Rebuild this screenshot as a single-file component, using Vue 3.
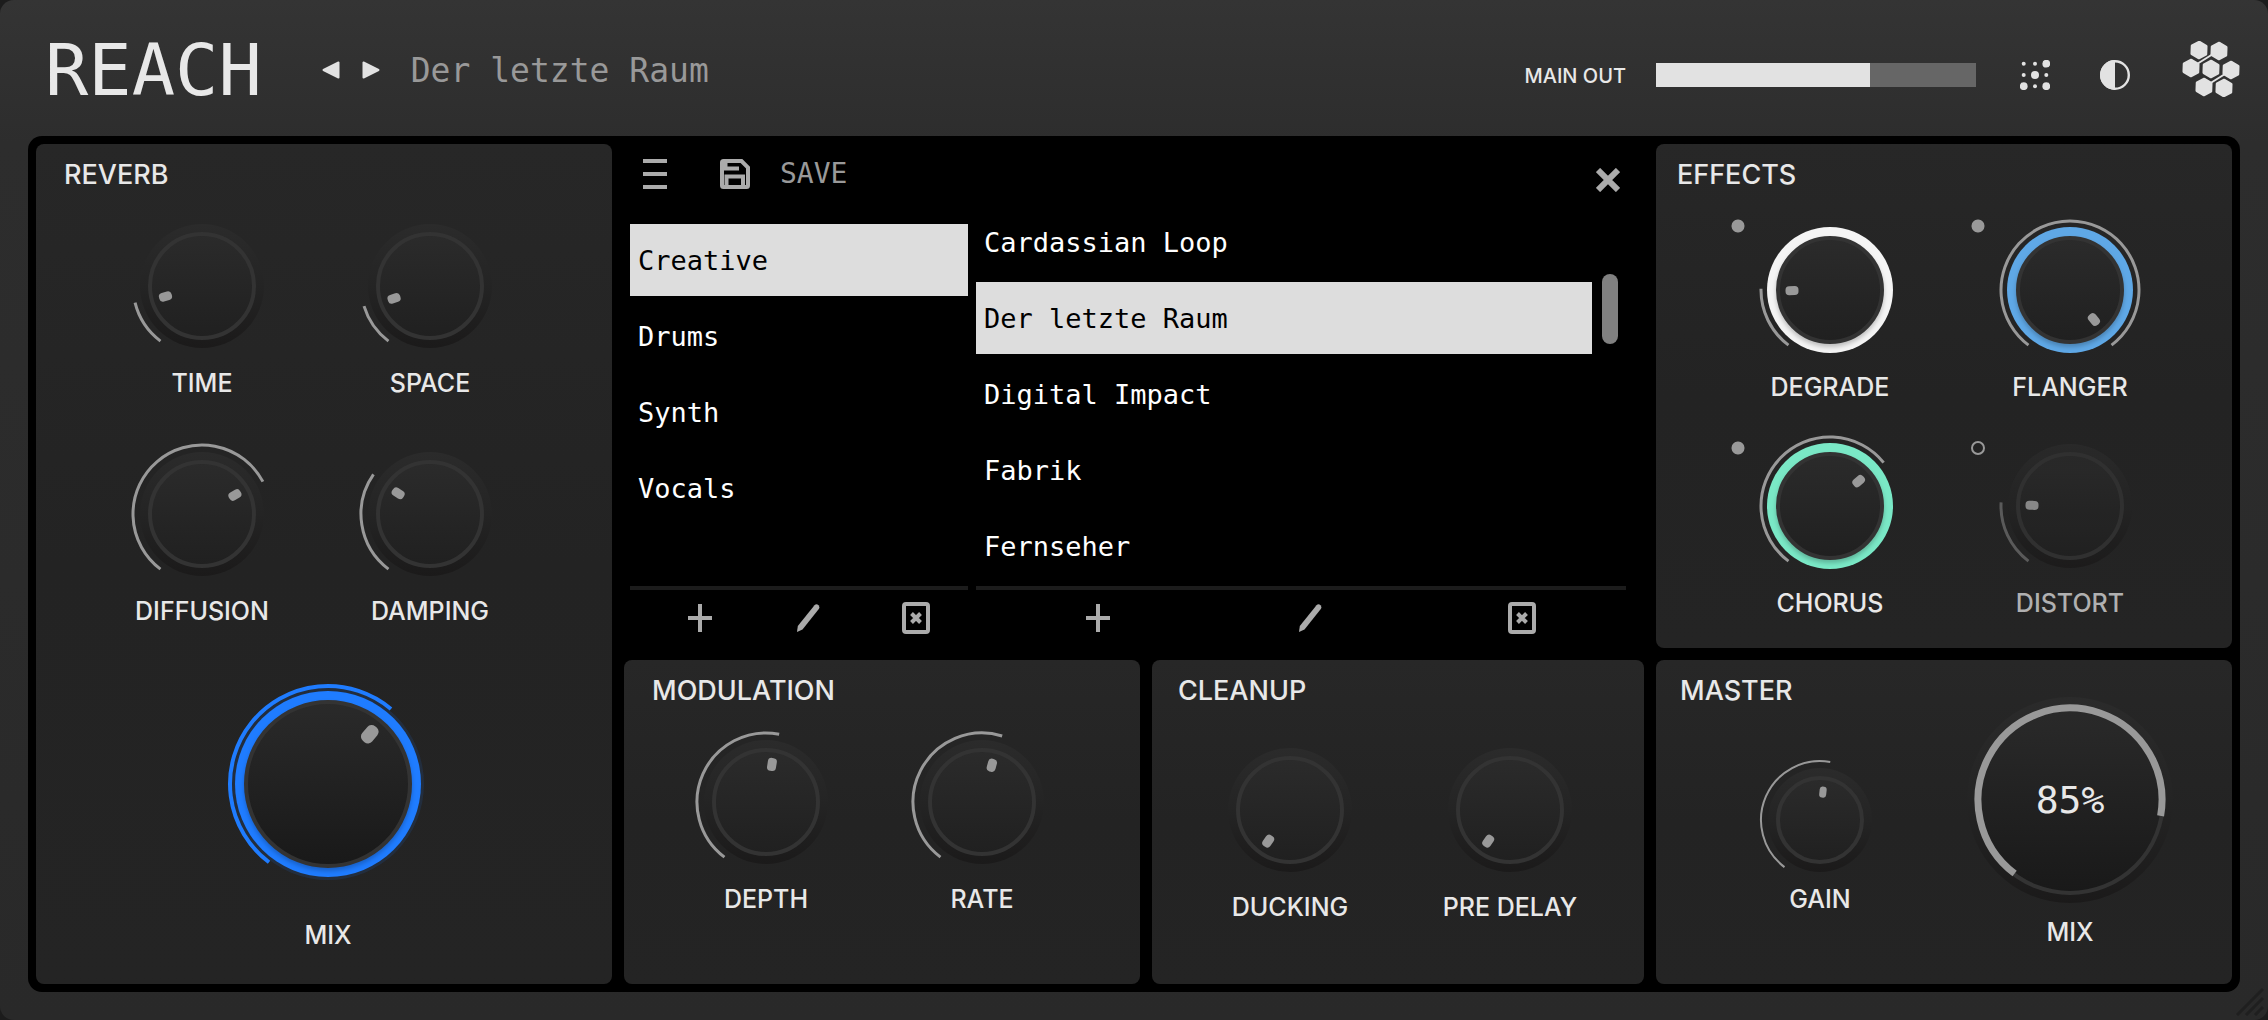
<script setup>
import { reactive, ref } from 'vue'

const START = -143

const sizes = {
  small: { box: 124, rim: 44, base: 52, arc: 59, arcWidth: 2, reach: 28, tick: [7, 11], lag: 4 },
  medium: { box: 144, rim: 54, base: 62, arc: 69, arcWidth: 3, reach: 38, tick: [9, 13], lag: 2 },
  large: { box: 208, rim: 84, base: 93, arc: 98, arcWidth: 4, reach: 65, tick: [13, 19], lag: 0 },
  readout: { box: 208, rim: 95, base: 103, arc: 92, arcWidth: 7, reach: 0, tick: null, lag: 0 },
}

const panels = reactive([
  {
    id: 'reverb',
    title: 'REVERB',
    knobs: [
      { id: 'time', label: 'TIME', size: 'medium', angle: -104 },
      { id: 'space', label: 'SPACE', size: 'medium', angle: -107 },
      { id: 'diffusion', label: 'DIFFUSION', size: 'medium', angle: 62 },
      { id: 'damping', label: 'DAMPING', size: 'medium', angle: -55 },
      { id: 'mix', label: 'MIX', size: 'large', angle: 40, halo: '#1f7cff', arcColor: '#1f7cff' },
    ],
  },
  {
    id: 'effects',
    title: 'EFFECTS',
    knobs: [
      { id: 'degrade', label: 'DEGRADE', size: 'medium', angle: -89, halo: '#f4f4f4', toggle: true, on: true },
      { id: 'flanger', label: 'FLANGER', size: 'medium', angle: 143, halo: '#5fa8e6', toggle: true, on: true },
      { id: 'chorus', label: 'CHORUS', size: 'medium', angle: 51, halo: '#7ae8c6', toggle: true, on: true },
      { id: 'distort', label: 'DISTORT', size: 'medium', angle: -87, toggle: true, on: false },
    ],
  },
  {
    id: 'modulation',
    title: 'MODULATION',
    knobs: [
      { id: 'depth', label: 'DEPTH', size: 'medium', angle: 11 },
      { id: 'rate', label: 'RATE', size: 'medium', angle: 17 },
    ],
  },
  {
    id: 'cleanup',
    title: 'CLEANUP',
    knobs: [
      { id: 'ducking', label: 'DUCKING', size: 'medium', angle: START },
      { id: 'predelay', label: 'PRE DELAY', size: 'medium', angle: START },
    ],
  },
  {
    id: 'master',
    title: 'MASTER',
    knobs: [
      { id: 'gain', label: 'GAIN', size: 'small', angle: 10 },
      { id: 'output', label: 'MIX', size: 'readout', angle: 100, text: '85%' },
    ],
  },
])

function point(center, radius, angle) {
  const a = (angle * Math.PI) / 180
  return `${(center + radius * Math.sin(a)).toFixed(2)} ${(center - radius * Math.cos(a)).toFixed(2)}`
}

function arcPath(knob) {
  const s = sizes[knob.size]
  const c = s.box / 2
  const sweep = knob.angle - START
  if (sweep <= 0) return ''
  return `M${point(c, s.arc, START)}A${s.arc} ${s.arc} 0 ${sweep > 180 ? 1 : 0} 1 ${point(c, s.arc, knob.angle)}`
}

const folders = ['Creative', 'Drums', 'Synth', 'Vocals']
const presets = ['Cardassian Loop', 'Der letzte Raum', 'Digital Impact', 'Fabrik', 'Fernseher']
const folder = ref('Creative')
const preset = ref('Der letzte Raum')
const level = ref(67)

const hexes = [[17, 9], [37, 10], [9, 27], [29, 28], [49, 29], [22, 46], [42, 47]]
</script>

<template>
  <div class="plugin">
    <svg class="defs" width="0" height="0" aria-hidden="true">
      <defs>
        <linearGradient id="knob-face" x1="0" y1="0" x2="0" y2="1">
          <stop offset="0" stop-color="#2b2b2b" />
          <stop offset="1" stop-color="#202020" />
        </linearGradient>
        <linearGradient id="knob-face-deep" x1="0" y1="0" x2="0" y2="1">
          <stop offset="0" stop-color="#2a2a2a" />
          <stop offset="1" stop-color="#191919" />
        </linearGradient>
        <linearGradient id="knob-base" x1="0" y1="0" x2="0" y2="1">
          <stop offset="0" stop-color="#2b2b2b" />
          <stop offset="0.5" stop-color="#242424" />
          <stop offset="1" stop-color="#1b1a1a" />
        </linearGradient>
      </defs>
    </svg>

    <header class="header">
      <h1 class="brand">REACH</h1>
      <div class="stepper">
        <button type="button" aria-label="Previous preset">
          <svg width="18" height="18" viewBox="0 0 18 18"><path d="M16.500 1.500v15L1.500 9z" class="tri" /></svg>
        </button>
        <button type="button" aria-label="Next preset">
          <svg width="18" height="18" viewBox="0 0 18 18"><path d="M1.500 1.500v15L16.500 9z" class="tri" /></svg>
        </button>
      </div>
      <p class="current">{{ preset }}</p>

      <div class="output">
        <span id="main-out" class="output-label">MAIN OUT</span>
        <div class="meter" role="meter" aria-labelledby="main-out" :aria-valuenow="level" aria-valuemin="0" aria-valuemax="100">
          <div class="meter-fill" :style="{ width: level + '%' }"></div>
        </div>
        <button type="button" class="icon-randomize" aria-label="Randomize">
          <svg width="30" height="30" viewBox="0 0 30 30" fill="#e2e2e2">
            <circle cx="3.700" cy="3.700" r="2" /><circle cx="15" cy="3.700" r="2" /><circle cx="26.300" cy="3.700" r="3.900" />
            <circle cx="3.700" cy="15" r="2" /><circle cx="15" cy="15" r="4" /><circle cx="26.300" cy="15" r="2" />
            <circle cx="3.700" cy="26.200" r="3.900" /><circle cx="15" cy="26.200" r="2" /><circle cx="26.300" cy="26.200" r="3.900" />
          </svg>
        </button>
        <button type="button" class="icon-theme" aria-label="Theme">
          <svg width="30" height="30" viewBox="0 0 30 30">
            <circle cx="15" cy="15" r="13.800" fill="none" stroke="#e2e2e2" stroke-width="2.400" />
            <path d="M15 0a15 15 0 0 0 0 30z" fill="#e2e2e2" />
          </svg>
        </button>
        <a href="#" class="logo" aria-label="About">
          <svg width="58" height="56" viewBox="0 0 58 56">
            <g fill="#e2e2e2" stroke="#e2e2e2" stroke-width="3" stroke-linejoin="round">
              <path
                v-for="([x, y], i) in hexes"
                :key="i"
                d="M0-7.800L6.900-3.900V3.900L0 7.800-6.900 3.900V-3.900z"
                :transform="`translate(${x} ${y}) rotate(2)`"
              />
            </g>
            <path d="M15 23L31 13M27 43L43 33" stroke="#e2e2e2" stroke-width="2" />
          </svg>
        </a>
      </div>
    </header>

    <main class="frame">
      <section class="browser" aria-label="Preset browser">
        <div class="toolbar">
          <button type="button" aria-label="Menu">
            <svg width="24" height="30" viewBox="0 0 24 30"><path d="M0 2h24M0 15h24M0 28h24" class="line" /></svg>
          </button>
          <button type="button" class="save">
            <svg width="30" height="30" viewBox="0 0 30 30">
              <path d="M4 2h17.500L28 8.500V26.500Q28 28 26.500 28H3.500Q2 28 2 26.500V3.500Q2 2 3.500 2z" class="line" />
              <path d="M5.500 2v7.500H19M6.500 28V17.500H23V28" class="line" />
            </svg>
            <span>SAVE</span>
          </button>
          <button type="button" class="close" aria-label="Close">
            <svg width="24" height="24" viewBox="0 0 24 24"><path d="M2 2l20 20M22 2L2 22" class="line thick" /></svg>
          </button>
        </div>

        <div class="column">
          <div class="viewport">
            <ul class="list">
              <li v-for="name in folders" :key="name">
                <button type="button" class="row" :class="{ active: name === folder }" @click="folder = name">{{ name }}</button>
              </li>
            </ul>
          </div>
          <div class="actions">
            <button type="button" aria-label="Add folder">
              <svg width="24" height="28" viewBox="0 0 24 28"><path d="M12 0v28M0 14h24" class="line" /></svg>
            </button>
            <button type="button" aria-label="Rename folder">
              <svg width="24" height="28" viewBox="0 0 24 28"><path d="M18.500 1.200Q20.500-.5 22.500 1.200 24 2.800 22.800 5L6.500 25.500 1 28 1.800 22z" fill="#ababab" /></svg>
            </button>
            <button type="button" aria-label="Delete folder">
              <svg width="28" height="32" viewBox="0 0 28 32">
                <rect x="2" y="2" width="24" height="28" rx="2" class="line" />
                <path d="M9.500 11.500l9 9M18.500 11.500l-9 9" class="line" />
              </svg>
            </button>
          </div>
        </div>

        <div class="column">
          <div class="viewport scrolled">
            <ul class="list">
              <li v-for="name in presets" :key="name">
                <button type="button" class="row" :class="{ active: name === preset }" @click="preset = name">{{ name }}</button>
              </li>
            </ul>
            <div class="thumb"></div>
          </div>
          <div class="actions">
            <button type="button" aria-label="Add preset">
              <svg width="24" height="28" viewBox="0 0 24 28"><path d="M12 0v28M0 14h24" class="line" /></svg>
            </button>
            <button type="button" aria-label="Rename preset">
              <svg width="24" height="28" viewBox="0 0 24 28"><path d="M18.500 1.200Q20.500-.5 22.500 1.200 24 2.800 22.800 5L6.500 25.500 1 28 1.800 22z" fill="#ababab" /></svg>
            </button>
            <button type="button" aria-label="Delete preset">
              <svg width="28" height="32" viewBox="0 0 28 32">
                <rect x="2" y="2" width="24" height="28" rx="2" class="line" />
                <path d="M9.500 11.500l9 9M18.500 11.500l-9 9" class="line" />
              </svg>
            </button>
          </div>
        </div>
      </section>

      <section v-for="panel in panels" :key="panel.id" class="panel" :class="panel.id">
        <h2 class="panel-title">{{ panel.title }}</h2>
        <div class="knobs">
          <div v-for="knob in panel.knobs" :key="knob.id" class="cell" :class="[knob.size, { off: knob.toggle && !knob.on }]">
            <input v-if="knob.toggle" v-model="knob.on" type="checkbox" class="toggle" :aria-label="knob.label + ' on'" />
            <label class="knob" :for="knob.id">
              <span class="dial">
                <svg
                  :width="sizes[knob.size].box"
                  :height="sizes[knob.size].box"
                  :viewBox="`0 0 ${sizes[knob.size].box} ${sizes[knob.size].box}`"
                  aria-hidden="true"
                >
                  <g :transform="`translate(${sizes[knob.size].box / 2} ${sizes[knob.size].box / 2})`">
                    <circle v-if="knob.arcColor" :r="sizes[knob.size].arc - 2" :fill="knob.arcColor" opacity="0.12" />
                    <circle :r="knob.halo ? sizes[knob.size].rim + 9 : sizes[knob.size].base" :fill="knob.halo || 'url(#knob-base)'" />
                    <circle
                      :r="sizes[knob.size].rim - 2"
                      :fill="sizes[knob.size].rim > 80 ? 'url(#knob-face-deep)' : 'url(#knob-face)'"
                      stroke="#333333"
                      stroke-width="4"
                      :class="{ lifted: knob.halo }"
                    />
                    <rect
                      v-if="sizes[knob.size].tick"
                      :x="-sizes[knob.size].tick[0] / 2"
                      :y="-sizes[knob.size].reach - sizes[knob.size].tick[1] / 2"
                      :width="sizes[knob.size].tick[0]"
                      :height="sizes[knob.size].tick[1]"
                      :rx="sizes[knob.size].tick[0] * 0.42"
                      fill="#999999"
                      :transform="`rotate(${knob.angle - sizes[knob.size].lag})`"
                    />
                  </g>
                  <path :d="arcPath(knob)" fill="none" :stroke="knob.arcColor || '#999999'" :stroke-width="sizes[knob.size].arcWidth" class="arc" />
                </svg>
                <span v-if="knob.text" class="value">{{ knob.text }}</span>
                <input :id="knob.id" v-model.number="knob.angle" type="range" min="-143" max="143" />
              </span>
              <span class="name">{{ knob.label }}</span>
            </label>
          </div>
        </div>
      </section>
    </main>

    <svg class="grip" width="28" height="28" viewBox="0 0 28 28" aria-hidden="true">
      <path d="M1 27L27 1M10 27L27 10M19 27l8-8" stroke="#1f1f1f" stroke-width="3" />
    </svg>
  </div>
</template>

<style>
body {
  margin: 0;
  background: #1c1c1c;
}
</style>

<style scoped>
.plugin {
  position: relative;
  display: flex;
  flex-direction: column;
  min-height: 100vh;
  box-sizing: border-box;
  padding: 0 28px 28px;
  border-radius: 14px;
  background: linear-gradient(#343434, #2d2d2d 14%, #292929);
  color: #e8e8e8;
  font-family: Inter, 'Liberation Sans', sans-serif;
}

.defs {
  position: absolute;
}

button {
  display: block;
  margin: 0;
  padding: 0;
  border: 0;
  background: none;
  color: inherit;
  font: inherit;
  cursor: pointer;
}

svg {
  display: block;
}

h1,
h2,
p,
ul {
  margin: 0;
  padding: 0;
  list-style: none;
}

.header {
  display: flex;
  align-items: center;
  height: 136px;
  padding: 4px 0 0 17px;
  box-sizing: border-box;
}

.brand,
.current,
.save,
.row,
.value {
  font-family: 'DejaVu Sans Mono', 'Liberation Mono', monospace;
  font-weight: 400;
}

.brand {
  font-size: 72px;
  line-height: 80px;
}

.stepper {
  display: flex;
  gap: 22px;
  margin: 0 31px 0 60px;
}

.tri {
  fill: #e2e2e2;
  stroke: #e2e2e2;
  stroke-width: 2px;
  stroke-linejoin: round;
}

.current {
  padding-top: 2px;
  color: #999999;
  font-size: 33px;
  line-height: 40px;
}

.output {
  display: flex;
  align-items: center;
  margin-left: auto;
  padding-top: 10px;
}

.output-label {
  padding-top: 1px;
  font-size: 20px;
  font-weight: 500;
  line-height: 24px;
}

.meter {
  width: 320px;
  height: 24px;
  margin: 0 44px 0 30px;
  background: #666666;
}

.meter-fill {
  height: 100%;
  background: #e2e2e2;
}

.icon-theme {
  margin: 0 52px 0 50px;
}

.logo {
  margin-bottom: 12px;
}

.frame {
  display: grid;
  flex: 1;
  grid-template-columns: 576fr 516fr 492fr 576fr;
  grid-template-rows: 504fr 324fr;
  grid-template-areas:
    'reverb browser browser effects'
    'reverb modulation cleanup master';
  gap: 12px;
  padding: 8px;
  border-radius: 14px;
  background: #000000;
}

.panel {
  min-width: 0;
  padding-top: 15px;
  border-radius: 8px;
  background: linear-gradient(#272727, #232323 50%, #242424);
}

.panel-title {
  padding-left: 28px;
  font-size: 27px;
  font-weight: 500;
  line-height: 32px;
}

.effects .panel-title {
  padding-left: 21px;
}

.master .panel-title {
  padding-left: 24px;
}

.cleanup .panel-title {
  padding-left: 26px;
}

.reverb {
  grid-area: reverb;
}

.effects {
  grid-area: effects;
}

.modulation {
  grid-area: modulation;
}

.cleanup {
  grid-area: cleanup;
}

.master {
  grid-area: master;
}

.knobs {
  display: grid;
  justify-content: center;
  padding-top: 23px;
}

.reverb .knobs {
  grid-template-columns: 228px 228px;
  row-gap: 44px;
  padding-right: 16px;
}

.effects .knobs {
  grid-template-columns: 240px 240px;
  row-gap: 32px;
  padding-top: 27px;
  padding-left: 12px;
}

.modulation .knobs {
  grid-template-columns: 216px 216px;
  padding-right: 16px;
}

.cleanup .knobs {
  grid-template-columns: 220px 220px;
  padding-top: 31px;
  padding-left: 4px;
}

.master .knobs {
  grid-template-columns: 124px 208px;
  column-gap: 84px;
  margin-top: -11px;
  padding-top: 0;
  padding-left: 44px;
}

.cell {
  display: flex;
  justify-content: center;
  align-items: flex-start;
}

.reverb .large {
  grid-column: 1 / 3;
  padding: 10px 0 0 24px;
}

.master .small {
  padding-top: 62px;
}

.effects .cell {
  display: grid;
  grid-template-columns: 48px 144px 48px;
}

.toggle {
  width: 14px;
  height: 14px;
  margin: 1px 0 0 21px;
  border: 2px solid #999999;
  border-radius: 50%;
  appearance: none;
}

.effects .cell:nth-child(n + 3) .toggle {
  margin-top: 7px;
}

.toggle:checked {
  border: 0;
  background: radial-gradient(#999999 6px, transparent 7px);
}

.knob {
  display: flex;
  flex-direction: column;
  align-items: center;
  gap: 10px;
}

.large .knob {
  gap: 32px;
}

.small .knob {
  gap: 2px;
}

.readout .knob {
  gap: 13px;
}

.dial {
  position: relative;
  display: block;
}

.dial input {
  position: absolute;
  inset: 0;
  width: 100%;
  height: 100%;
  margin: 0;
  opacity: 0;
  cursor: pointer;
}

.lifted {
  filter: drop-shadow(0 3px 2px rgba(0, 0, 0, 0.22));
}

.value {
  position: absolute;
  inset: 0;
  display: flex;
  align-items: center;
  justify-content: center;
  font-size: 38px;
}

.name {
  font-size: 25px;
  font-weight: 500;
  line-height: 30px;
  white-space: nowrap;
}

.off .name {
  color: #b0b0b0;
}

.off .dial svg {
  opacity: 0.85;
}

.off .arc {
  opacity: 0.55;
}

.browser {
  grid-area: browser;
  display: grid;
  grid-template-columns: 338fr 650fr;
  grid-template-rows: 80px 1fr;
  column-gap: 8px;
  padding: 0 18px 0 6px;
}

.toolbar {
  grid-column: 1 / 3;
  display: flex;
  align-items: center;
  height: 60px;
  padding: 0 6px 0 13px;
}

.line {
  fill: none;
  stroke: #ababab;
  stroke-width: 4px;
}

.thick {
  stroke-width: 6px;
}

.save {
  display: flex;
  align-items: center;
  gap: 30px;
  margin-left: 53px;
  color: #999999;
  font-size: 28px;
  line-height: 32px;
}

.close {
  margin: 12px 0 0 auto;
}

.column {
  display: flex;
  flex-direction: column;
  min-width: 0;
}

.viewport {
  display: flex;
  flex: 1;
  overflow: hidden;
  border-bottom: 4px solid #1c1c1c;
}

.list {
  display: flex;
  flex: 1;
  flex-direction: column;
  gap: 4px;
}

.scrolled .list {
  margin-top: -18px;
}

.row {
  width: 100%;
  height: 72px;
  padding: 1px 8px 0;
  color: #ffffff;
  font-size: 27px;
  line-height: 32px;
  text-align: left;
}

.row.active {
  background: #dddddd;
  color: #000000;
}

.thumb {
  width: 16px;
  height: 70px;
  margin: 50px 8px 0 10px;
  border-radius: 8px;
  background: #808080;
}

.actions {
  display: grid;
  grid-template-columns: repeat(3, 1fr);
  align-items: center;
  justify-items: center;
  height: 55px;
  margin-right: -2px;
  padding: 0 0 3px 16px;
}

.grip {
  position: absolute;
  right: 4px;
  bottom: 4px;
}
</style>
